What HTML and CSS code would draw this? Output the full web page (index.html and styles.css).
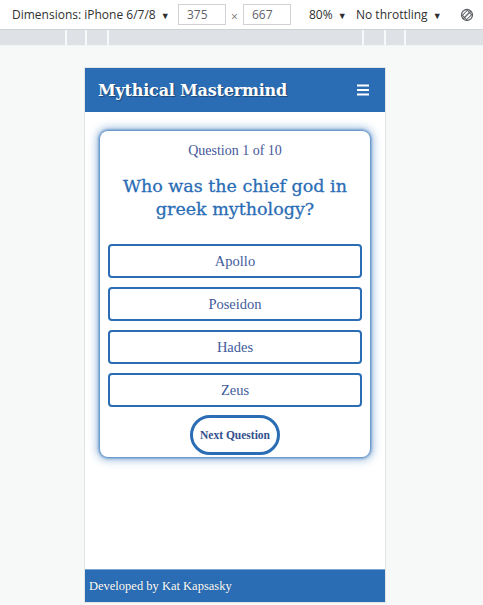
FILE: index.html
```html
<!DOCTYPE html>
<html>
<head>
<meta charset="utf-8">
<link rel="stylesheet" href="styles.css">
</head>
<body>
<div class="toolbar">
  <span class="dim">Dimensions: iPhone 6/7/8 <span class="caret">▼</span></span>
  <span class="box">375</span>
  <span class="times">×</span>
  <span class="box">667</span>
  <span class="zoom">80% <span class="caret">▼</span></span>
  <span class="throttle">No throttling <span class="caret">▼</span></span>
  <svg class="rotate" width="14" height="14" viewBox="0 0 14 14"><circle cx="7" cy="7" r="5.5" fill="none" stroke="#5f6368" stroke-width="1.3"/><line x1="3" y1="11" x2="11" y2="3" stroke="#5f6368" stroke-width="1.3"/><rect x="4" y="3.5" width="6" height="7" transform="rotate(45 7 7)" fill="none" stroke="#5f6368" stroke-width="1"/></svg>
</div>
<div class="ruler">
  <div class="seg s1"></div><div class="seg s2"></div><div class="seg s3"></div><div class="seg s4"></div><div class="seg s5"></div><div class="seg s6"></div>
</div>
<div class="stage">
  <div class="device">
    <header class="nav">
      <span class="brand">Mythical Mastermind</span>
      <svg class="burger" width="12" height="12" viewBox="0 0 12 12"><rect x="0" y="0.5" width="12" height="2" fill="#fff"/><rect x="0" y="5" width="12" height="2" fill="#fff"/><rect x="0" y="9.5" width="12" height="2" fill="#fff"/></svg>
    </header>
    <main class="main">
      <div class="card">
        <p class="count">Question 1 of 10</p>
        <h2 class="question">Who was the chief god in greek mythology?</h2>
        <div class="options">
          <button class="opt">Apollo</button>
          <button class="opt">Poseidon</button>
          <button class="opt">Hades</button>
          <button class="opt">Zeus</button>
        </div>
        <button class="next">Next Question</button>
      </div>
    </main>
    <footer class="foot">Developed by Kat Kapsasky</footer>
  </div>
</div>
</body>
</html>
```
FILE: styles.css
```css
* { box-sizing: border-box; }
html, body { margin: 0; padding: 0; }
body {
  width: 483px;
  height: 605px;
  overflow: hidden;
  background: #f7f8f8;
  font-family: "Open Sans", "Liberation Sans", sans-serif;
}
.toolbar {
  height: 30px;
  background: #ffffff;
  border-bottom: 1px solid #cfd1d4;
  display: flex;
  align-items: center;
  font-size: 12px;
  color: #303030;
  padding-left: 12px;
  font-family: "Open Sans", "Liberation Sans", sans-serif;
}
.caret { font-size: 9px; margin-left: 2px; }
.dim { width: 166px; }
.box {
  width: 48px;
  height: 21px;
  border: 1px solid #cfd1d4;
  color: #5f6368;
  padding-left: 8px;
  line-height: 19px;
}
.times { width: 17px; text-align: center; color: #777; font-size: 12px; padding-top: 3px; }
.zoom { margin-left: 18px; width: 47px; }
.throttle { width: 104px; }
.ruler {
  height: 16px;
  background: #dee1e6;
  position: relative;
  border-bottom: 1px solid #f1f3f4;
}
.seg { position: absolute; top: 0; bottom: 0; width: 2px; background: #f8f9fa; }
.s1 { left: 65px; } .s2 { left: 85px; } .s3 { left: 107px; }
.s4 { left: 362px; } .s5 { left: 384px; } .s6 { left: 404px; }
.stage {
  padding-top: 21px;
  padding-left: 84px;
  display: flex;
}
.device {
  width: 302px;
  height: 536px;
  border: 1px solid #e3e4e6;
  background: #fff;
  display: flex;
  flex-direction: column;
}
.nav {
  height: 44px;
  background: #2a6db5;
  display: flex;
  align-items: center;
  justify-content: space-between;
  padding: 0 16px 0 13px;
}
.brand {
  font-family: "DejaVu Serif", serif;
  font-weight: bold;
  color: #fff;
  font-size: 16px;
  letter-spacing: -0.2px;
  text-shadow: 1px 1px 1px rgba(0,0,0,0.35);
}
.burger { display: block; }
.main {
  flex: 1;
  padding: 19px 15px 0 15px;
}
.card {
  background: #fff;
  border-radius: 8px;
  box-shadow: 0 0 3px 1px rgba(42,109,181,0.85), 0 0 9px 3px rgba(42,109,181,0.45);
  padding: 12px 8px 2px 8px;
  display: flex;
  flex-direction: column;
  align-items: center;
  height: 326px;
}
.count {
  margin: 0;
  font-family: "Liberation Serif", serif;
  font-size: 14px;
  color: #46589a;
}
.question {
  margin: 16px 0 0 0;
  font-family: "DejaVu Serif", serif;
  font-weight: normal;
  font-size: 17.5px;
  line-height: 23px;
  color: #2a6db5;
  text-align: center;
  -webkit-text-stroke: 0.3px #2a6db5;
}
.options {
  width: 100%;
  display: flex;
  flex-direction: column;
  gap: 9px;
  margin-top: 23px;
}
.opt {
  height: 34px;
  border: 2px solid #2a6db5;
  border-radius: 4px;
  background: #fff;
  font-family: "Liberation Serif", serif;
  font-size: 14.5px;
  color: #3f5c9c;
  padding: 0;
}
.next {
  margin-top: 8px;
  width: 90px;
  height: 42px;
  border: 3px solid #2a6db5;
  border-radius: 21px;
  background: #fff;
  font-family: "Liberation Serif", serif;
  font-weight: bold;
  font-size: 11.5px;
  color: #33508e;
  padding: 0;
}
.foot {
  height: 33px;
  background: #2a6db5;
  border-top: 1px solid #7aa6d6;
  color: #fff;
  font-family: "Liberation Serif", serif;
  font-size: 12.5px;
  display: flex;
  align-items: center;
  padding-left: 4px;
  text-shadow: 0 0 1px rgba(0,0,0,0.3);
}
```
